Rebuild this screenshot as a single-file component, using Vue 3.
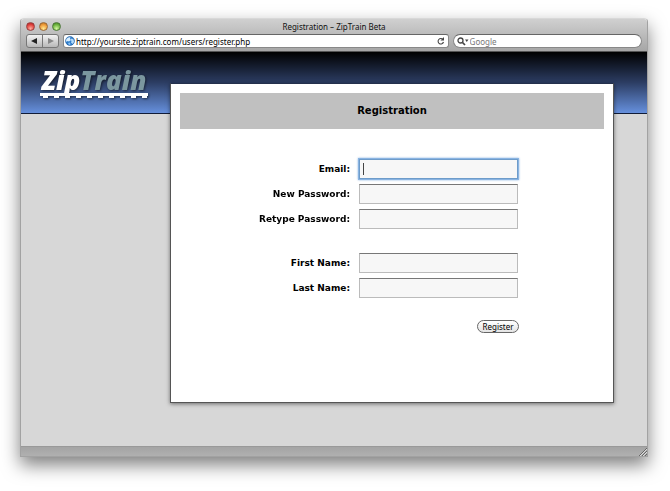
<script setup>
    import {ref, onMounted} from 'vue'

    const url = ref('http://yoursite.ziptrain.com/users/register.php')
    const search = ref('')
    const groups = ref([
        [
            {id: 'email', label: 'Email:', type: 'text', value: ''},
            {id: 'password', label: 'New Password:', type: 'password', value: ''},
            {id: 'retype', label: 'Retype Password:', type: 'password', value: ''}
        ],
        [
            {id: 'first', label: 'First Name:', type: 'text', value: ''},
            {id: 'last', label: 'Last Name:', type: 'text', value: ''}
        ]
    ])

    onMounted(() => {
        document.getElementById('email').focus()
    })
</script>

<template>
    <div class="window">
        <div class="chrome">
            <div class="titlebar">
                <div class="lights">
                    <button class="light red" aria-label="Close"></button>
                    <button class="light yellow" aria-label="Minimize"></button>
                    <button class="light green" aria-label="Zoom"></button>
                </div>
                <div class="title">Registration – ZipTrain Beta</div>
            </div>
            <div class="toolbar">
                <div class="nav">
                    <button aria-label="Back">
                        <svg width="7" height="6" viewBox="0 0 7 6"><path d="M6 0V6L0 3Z" fill="#222"/></svg>
                    </button>
                    <button aria-label="Forward">
                        <svg width="7" height="6" viewBox="0 0 7 6"><path d="M1 0V6L7 3Z" fill="#888"/></svg>
                    </button>
                </div>
                <div class="field address">
                    <svg width="10" height="10" viewBox="0 0 20 20">
                        <circle cx="10" cy="10" r="9" fill="#2f7dcc" stroke="#1c5595" stroke-width="1"/>
                        <path d="M3 6Q7 1 11 3L10 6L12 8L8 11L5 10L3 12L2 9Z" fill="#d9efff"/>
                        <path d="M13 5L17 7L18 12L15 16L12 13L13 10L11 8Z" fill="#b4dbfa"/>
                        <path d="M6 14L10 13L11 17L8 18Z" fill="#8cc4f2"/>
                    </svg>
                    <input v-model="url" aria-label="Address">
                    <button class="reload" aria-label="Reload">
                        <svg width="8" height="8" viewBox="0 0 16 16">
                            <path d="M12 5A5.500 5.500 0 1 0 13 10" fill="none" stroke="#444" stroke-width="2.200"/>
                            <path d="M14 0V7H7Z" fill="#444"/>
                        </svg>
                    </button>
                </div>
                <div class="field search">
                    <svg width="12" height="9" viewBox="0 0 24 18">
                        <circle cx="7" cy="7" r="5" fill="none" stroke="#444" stroke-width="2.600"/>
                        <path d="M11 11L16 16" stroke="#444" stroke-width="3.400"/>
                        <path d="M16 5H23L19.500 10Z" fill="#444"/>
                    </svg>
                    <input v-model="search" placeholder="Google" aria-label="Search">
                </div>
            </div>
        </div>

        <div class="page">
            <div class="banner">
                <a class="logo" href="#">
                    <span class="name">Zip<span class="train">Train</span></span>
                    <svg width="108" height="6" viewBox="0 0 108 6">
                        <path d="M0 0H108V3H107V5H102V3H96V5H91V3H85V5H80V3H74V5H69V3H63V5H58V3H52V5H47V3H41V5H36V3H30V5H25V3H19V5H14V3H8V5H3V3H0Z" fill="#fff"/>
                    </svg>
                </a>
            </div>
            <div class="card">
                <h1>Registration</h1>
                <form @submit.prevent>
                    <div v-for="(group, i) in groups" :key="i" class="group">
                        <div v-for="field in group" :key="field.id" class="row">
                            <label :for="field.id">{{ field.label }}</label>
                            <input :id="field.id" v-model="field.value" :type="field.type">
                        </div>
                    </div>
                    <div class="actions">
                        <button>Register</button>
                    </div>
                </form>
            </div>
        </div>

        <div class="statusbar">
            <svg width="8" height="8" viewBox="0 0 8 8">
                <path d="M0 8L8 0M3 8L8 3M6 8L8 6" stroke="#666" stroke-width="1"/>
                <path d="M1 8L8 1M4 8L8 4" stroke="#ddd" stroke-width="1"/>
            </svg>
        </div>
    </div>
</template>

<style>
    body{
        margin: 0;
        background: #fff;
    }

    #app{
        padding: 18px 22px 34px 20px;
    }
</style>

<style scoped>
    .window{
        border: 1px solid #a2a2a2;
        border-top-color: #d8d8d8;
        border-radius: 4px 4px 0 0;
        box-shadow: 0 8px 18px rgba(0, 0, 0, 0.5);
        font-family: "Noto Sans", "Lucida Grande", sans-serif;
        font-size: 8px;
    }

    button, input{
        font-family: inherit;
        font-size: inherit;
        padding: 0;
        margin: 0;
        box-sizing: border-box;
    }

    svg{
        display: block;
        flex: none;
    }

    .chrome{
        background: linear-gradient(#d0d0d0, #a6a6a6);
        border-bottom: 1px solid #555;
        border-radius: 3px 3px 0 0;
        padding-bottom: 3px;
    }

    .titlebar{
        display: grid;
        grid-template-columns: 1fr auto 1fr;
        align-items: center;
        height: 15px;
    }

    .title{
        color: #111;
    }

    .lights{
        display: flex;
        gap: 4px;
        padding: 0 5px;
    }

    .light{
        width: 9px;
        height: 9px;
        border: 1px solid #555;
        border-radius: 50%;
    }

    .red{
        background: radial-gradient(circle at 50% 80%, #ffb0a0, #e0403c 60%, #a82020);
        border-color: #984040;
    }

    .yellow{
        background: radial-gradient(circle at 50% 80%, #ffe890, #ee9a38 60%, #b06818);
        border-color: #9a6a38;
    }

    .green{
        background: radial-gradient(circle at 50% 80%, #d4f8a0, #6eb440 60%, #3c7c1c);
        border-color: #4c7838;
    }

    .toolbar{
        display: flex;
        gap: 4px;
        padding: 0 5px;
        height: 14px;
    }

    .nav{
        display: flex;
        width: 33px;
        box-sizing: border-box;
        border: 1px solid #777;
        border-radius: 3px;
        background: linear-gradient(#f2f2f2, #b8b8b8);
    }

    .nav button{
        flex: 1;
        display: flex;
        align-items: center;
        justify-content: center;
        border: none;
        background: none;
    }

    .nav button + button{
        border-left: 1px solid #777;
    }

    .field{
        display: flex;
        align-items: center;
        gap: 1px;
        box-sizing: border-box;
        min-width: 0;
        padding: 0 3px 0 1px;
        border: 1px solid #888;
        border-top-color: #666;
        background: #fff;
    }

    .field input{
        flex: 1;
        min-width: 0;
        height: 12px;
        border: none;
        outline: none;
        background: none;
        color: #000;
    }

    .address{
        flex: 387;
        border-radius: 3px;
    }

    .search{
        flex: 185;
        border-radius: 7px;
        padding-left: 3px;
    }

    .search input::placeholder{
        color: #777;
        opacity: 1;
    }

    .reload{
        border: none;
        background: none;
    }

    .page{
        display: flow-root;
        background: #d7d7d7;
    }

    .banner{
        display: flex;
        height: 62px;
        box-sizing: border-box;
        padding: 15px 19px 0;
        background: linear-gradient(#000, #2c3d63 50%, #6690dd);
        border-bottom: 1px solid #111c38;
    }

    .logo{
        display: flex;
        flex-direction: column;
        text-decoration: none;
        filter: drop-shadow(1px 1px 1px rgba(0, 0, 0, 0.5));
    }

    .name{
        padding-left: 2px;
        color: #fff;
        font: italic 800 26px/26px "Open Sans", sans-serif;
    }

    .train{
        color: #7b979f;
    }

    .card{
        margin: -31px 33px 43px 149px;
        padding: 9px;
        border: 1px solid #555;
        border-top-color: #24304c;
        background: #fff;
        box-shadow: 0 1px 4px rgba(0, 0, 0, 0.5);
        font-family: "DejaVu Sans", Verdana, sans-serif;
    }

    h1{
        margin: 0;
        background: #c0c0c0;
        font-size: 10px;
        line-height: 36px;
        text-align: center;
    }

    form{
        display: flex;
        flex-direction: column;
        gap: 24px;
        padding: 30px 0 60px;
    }

    .group{
        display: flex;
        flex-direction: column;
        gap: 5px;
    }

    .row{
        display: grid;
        grid-template-columns: 170fr 245fr;
        gap: 9px;
        align-items: center;
    }

    label{
        font-size: 9px;
        font-weight: bold;
        text-align: right;
        white-space: nowrap;
    }

    .row input{
        width: 159px;
        height: 20px;
        padding: 0 3px;
        border: 1px solid #bbb;
        border-top-color: #777;
        background: #f7f7f7;
    }

    /* steady caret in place of the blinking one */
    .row input:focus{
        border-color: #6e9cca;
        outline: 1px solid #8ab4e2;
        box-shadow: 0 0 2px 1px #8ab4e2;
        caret-color: transparent;
        background: linear-gradient(#444, #444) 3px 3px / 1px 12px no-repeat #f7f7f7;
    }

    .actions{
        display: grid;
        grid-template-columns: 170fr 245fr;
        gap: 9px;
        margin-top: -2px;
    }

    .actions button{
        grid-column: 2;
        width: 42px;
        height: 13px;
        margin-left: 118px;
        border: 1px solid #666;
        border-radius: 7px;
        background: linear-gradient(#fff, #e4e4e4);
        font-family: "Noto Sans", "Lucida Grande", sans-serif;
        color: #000;
        line-height: 11px;
    }

    .statusbar{
        display: flex;
        justify-content: flex-end;
        align-items: flex-end;
        height: 10px;
        border-top: 1px solid #999;
        background: linear-gradient(#a4a4a4, #b0b0b0);
        box-sizing: border-box;
    }
</style>
